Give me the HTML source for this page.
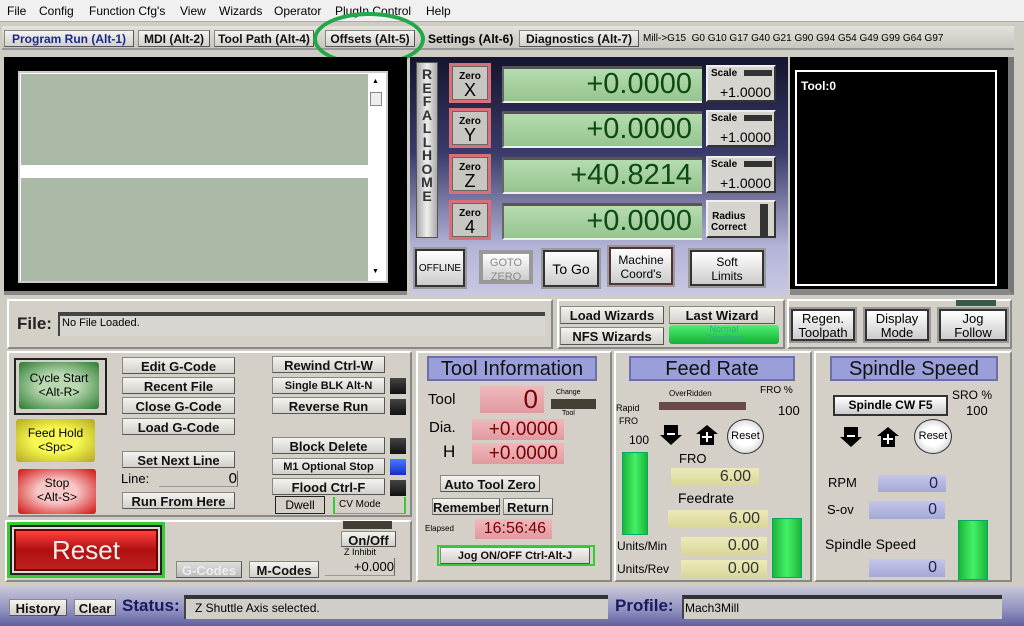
<!DOCTYPE html>
<html><head><meta charset="utf-8"><style>
*{box-sizing:border-box;margin:0;padding:0}
body{width:1024px;height:626px;overflow:hidden;background:#cfccc4;font-family:"Liberation Sans",sans-serif;position:relative}
div,span{position:absolute}
.b{background:linear-gradient(#f4f3f0,#d2d0ca);border:1px solid #8a877f;border-bottom-color:#555;border-right-color:#555;text-align:center;font-weight:bold;font-size:13px;color:#111;line-height:17px}
.t{white-space:nowrap}
.dro{background:linear-gradient(#b6dcb0,#96c48e);border-top:3px solid #555;border-left:2px solid #666;border-bottom:2px solid #eee;text-align:right;font-size:29px;color:#0c4a12;padding-right:10px;line-height:30px}
.zero{background:#c8c6c0;border:3px solid #d8707a;box-shadow:inset 0 0 0 1px #666;text-align:center;font-size:10px;font-weight:bold;line-height:11px}
.zero b{display:block;font-size:18px;font-weight:normal;line-height:17px}
.sc{background:#d6d4ce;border:2px solid #333;border-top-color:#eee;border-left-color:#eee;font-size:10px;font-weight:bold}
.pk{background:linear-gradient(#f0b8bc,#e09aa0);text-align:right;color:#700;font-size:19px;padding-right:6px}
.yl{background:linear-gradient(#ecebb8,#d8d69a);text-align:right;font-size:16px;color:#333;padding-right:8px}
.bl{background:linear-gradient(#c4c6ea,#a4a8d4);text-align:right;font-size:16px;color:#225;padding-right:8px}
.ttl{background:#9b9fd9;border:2px solid #6d70a8;text-align:center;font-size:20px;color:#111;line-height:22px}
.gbar{background:linear-gradient(90deg,#1bb63a,#44f066,#1bb63a);border:1px solid #0a6;}
.led{background:linear-gradient(#444,#111);width:16px;height:16px}
.pnl{background:#d4d0c8;border:2px solid #888;border-top-color:#fff;border-left-color:#fff}
.dk{border:2px solid #333;background:linear-gradient(#fff,#ccc);text-align:center;font-size:12px;line-height:14px;box-shadow:0 0 0 2px #999}
</style></head><body>
<div style="left:0;top:0;width:1024px;height:22px;background:#f0f0f0;border-bottom:1px solid #aaa"></div>
<span class="t" style="left:7px;top:4px;font-size:12px">File</span>
<span class="t" style="left:39px;top:4px;font-size:12px">Config</span>
<span class="t" style="left:89px;top:4px;font-size:12px">Function Cfg's</span>
<span class="t" style="left:180px;top:4px;font-size:12px">View</span>
<span class="t" style="left:219px;top:4px;font-size:12px">Wizards</span>
<span class="t" style="left:274px;top:4px;font-size:12px">Operator</span>
<span class="t" style="left:335px;top:4px;font-size:12px">PlugIn Control</span>
<span class="t" style="left:426px;top:4px;font-size:12px">Help</span>
<div style="left:2px;top:26px;width:1012px;height:24px;background:linear-gradient(#e4e2dc,#c8c5be);border-bottom:2px solid #999"></div>
<div class="b" style="left:4px;top:30px;width:130px;height:17px;color:#1a2a8a;font-size:12px">Program Run (Alt-1)</div>
<div class="b" style="left:138px;top:30px;width:72px;height:17px;font-size:12px">MDI (Alt-2)</div>
<div class="b" style="left:214px;top:30px;width:100px;height:17px;font-size:12px">Tool Path (Alt-4)</div>
<div class="b" style="left:325px;top:30px;width:90px;height:17px;font-size:12px">Offsets (Alt-5)</div>
<span class="t" style="left:428px;top:32px;font-size:12px;font-weight:bold">Settings (Alt-6)</span>
<div class="b" style="left:519px;top:30px;width:120px;height:17px;font-size:12px">Diagnostics (Alt-7)</div>
<span class="t" style="left:643px;top:33px;font-size:10px">Mill-&gt;G15 &nbsp;G0 G10 G17 G40 G21 G90 G94 G54 G49 G99 G64 G97</span>
<div style="left:313px;top:12px;width:112px;height:54px;border:4px solid #22a84a;border-radius:50%"></div>
<div style="left:4px;top:57px;width:403px;height:238px;background:#000;border-bottom:4px solid #888"></div>
<div style="left:18px;top:71px;width:370px;height:212px;background:#fff;border:2px solid #ccc"></div>
<div style="left:21px;top:74px;width:347px;height:91px;background:#abbaa7"></div>
<div style="left:21px;top:178px;width:347px;height:103px;background:#abbaa7"></div>
<div style="left:370px;top:92px;width:12px;height:14px;background:#eee;border:1px solid #888"></div>
<span class="t" style="left:372px;top:78px;font-size:7px">▲</span>
<span class="t" style="left:372px;top:268px;font-size:7px">▼</span>
<div style="left:410px;top:57px;width:378px;height:238px;background:linear-gradient(#15152e,#3a3a6a 40%,#b4b4d8 80%,#c8c8e4)"></div>
<div style="left:416px;top:62px;width:22px;height:176px;background:linear-gradient(90deg,#aaa,#eee,#aaa);border:1px solid #555;font-size:14px;text-align:center;line-height:13.5px;font-weight:bold;color:#333;padding-top:5px">R<br>E<br>F<br>A<br>L<br>L<br>H<br>O<br>M<br>E</div>
<div class="zero" style="left:449px;top:63px;width:42px;height:40px;padding-top:5px">Zero<b>X</b></div>
<div class="zero" style="left:449px;top:108px;width:42px;height:40px;padding-top:5px">Zero<b>Y</b></div>
<div class="zero" style="left:449px;top:154px;width:42px;height:40px;padding-top:5px">Zero<b>Z</b></div>
<div class="zero" style="left:449px;top:200px;width:42px;height:40px;padding-top:5px">Zero<b>4</b></div>
<div class="dro" style="left:502px;top:66px;width:200px;height:37px">+0.0000</div>
<div class="dro" style="left:502px;top:111px;width:200px;height:37px">+0.0000</div>
<div class="dro" style="left:502px;top:157px;width:200px;height:37px">+40.8214</div>
<div class="dro" style="left:502px;top:203px;width:200px;height:37px">+0.0000</div>
<div class="sc" style="left:706px;top:65px;width:70px;height:37px"><span style="left:3px;top:1px">Scale</span><span style="left:36px;top:3px;width:28px;height:6px;background:#333"></span><span style="right:3px;top:17px;font-size:14px;font-weight:normal">+1.0000</span></div>
<div class="sc" style="left:706px;top:110px;width:70px;height:37px"><span style="left:3px;top:1px">Scale</span><span style="left:36px;top:3px;width:28px;height:6px;background:#333"></span><span style="right:3px;top:17px;font-size:14px;font-weight:normal">+1.0000</span></div>
<div class="sc" style="left:706px;top:156px;width:70px;height:37px"><span style="left:3px;top:1px">Scale</span><span style="left:36px;top:3px;width:28px;height:6px;background:#333"></span><span style="right:3px;top:17px;font-size:14px;font-weight:normal">+1.0000</span></div>
<div class="sc" style="left:706px;top:200px;width:70px;height:38px"><span style="left:3px;top:9px;text-align:center;line-height:11px">Radius<br>Correct</span><span style="left:52px;top:2px;width:8px;height:32px;background:#333"></span></div>
<div class="dk" style="left:415px;top:249px;width:50px;height:38px;padding-top:11px;font-size:10px">OFFLINE</div>
<div class="dk" style="left:481px;top:252px;width:50px;height:30px;color:#888;border-color:#999;padding-top:2px;font-size:11px">GOTO<br>ZERO</div>
<div class="dk" style="left:543px;top:250px;width:56px;height:37px;padding-top:10px;font-size:14px">To Go</div>
<div class="dk" style="left:609px;top:247px;width:64px;height:38px;padding-top:4px;border-color:#533">Machine<br>Coord's</div>
<div class="dk" style="left:690px;top:250px;width:74px;height:36px;padding-top:3px">Soft<br>Limits</div>
<div style="left:790px;top:57px;width:224px;height:238px;background:#000;border-right:6px solid #777;border-bottom:6px solid #888"></div>
<div style="left:795px;top:70px;width:202px;height:216px;background:#000;border:2px solid #fff"></div>
<span class="t" style="left:801px;top:79px;color:#fff;font-size:12px;font-weight:bold">Tool:0</span>
<div class="pnl" style="left:7px;top:299px;width:546px;height:50px"></div>
<span class="t" style="left:17px;top:314px;font-size:17px;font-weight:bold;color:#222">File:</span>
<div style="left:58px;top:312px;width:487px;height:24px;background:#d8d6d0;border-top:4px solid #444;border-left:2px solid #444"></div>
<span class="t" style="left:62px;top:317px;font-size:11px">No File Loaded.</span>
<div class="pnl" style="left:557px;top:299px;width:228px;height:50px"></div>
<div class="b" style="left:560px;top:306px;width:104px;height:18px">Load Wizards</div>
<div class="b" style="left:669px;top:306px;width:106px;height:18px">Last Wizard</div>
<div class="b" style="left:560px;top:327px;width:104px;height:18px">NFS Wizards</div>
<div style="left:669px;top:325px;width:110px;height:19px;background:linear-gradient(#4ef070,#12b035);border-radius:3px;font-size:9px;color:#3a8;text-align:center;line-height:9px">Normal<br>Condition</div>
<div class="pnl" style="left:787px;top:299px;width:225px;height:50px"></div>
<div style="left:956px;top:300px;width:40px;height:6px;background:#3a5a48"></div>
<div class="dk" style="left:791px;top:309px;width:64px;height:32px;padding-top:1px;font-size:13px">Regen.<br>Toolpath</div>
<div class="dk" style="left:865px;top:309px;width:64px;height:32px;padding-top:1px;font-size:13px">Display<br>Mode</div>
<div class="dk" style="left:939px;top:309px;width:68px;height:32px;padding-top:1px;font-size:13px">Jog<br>Follow</div>
<div class="pnl" style="left:7px;top:351px;width:405px;height:166px"></div>
<div style="left:14px;top:358px;width:93px;height:57px;border:2px solid #222"></div>
<div style="left:19px;top:362px;width:80px;height:47px;background:radial-gradient(#b8d8b0 35%,#2a7a30);border-radius:3px;text-align:center;font-size:12px;line-height:14px;padding-top:9px">Cycle Start<br>&lt;Alt-R&gt;</div>
<div style="left:16px;top:419px;width:79px;height:43px;background:radial-gradient(#f8f850 40%,#b0a820);border-radius:3px;text-align:center;font-size:12px;line-height:14px;padding-top:7px">Feed Hold<br>&lt;Spc&gt;</div>
<div style="left:18px;top:469px;width:78px;height:45px;background:radial-gradient(#f8c8c8 35%,#d01010);border-radius:3px;text-align:center;font-size:12px;line-height:14px;padding-top:7px">Stop<br>&lt;Alt-S&gt;</div>
<div class="b" style="left:122px;top:357px;width:113px;height:17px">Edit G-Code</div>
<div class="b" style="left:122px;top:377px;width:113px;height:17px">Recent File</div>
<div class="b" style="left:122px;top:397px;width:113px;height:17px">Close G-Code</div>
<div class="b" style="left:122px;top:418px;width:113px;height:17px">Load G-Code</div>
<div class="b" style="left:122px;top:451px;width:113px;height:17px">Set Next Line</div>
<span class="t" style="left:121px;top:471px;font-size:13px">Line:</span>
<div style="left:159px;top:471px;width:79px;height:16px;border-bottom:1px solid #999;border-right:1px solid #666;text-align:right;font-size:15px;line-height:15px">0</div>
<div class="b" style="left:122px;top:492px;width:113px;height:17px">Run From Here</div>
<div class="b" style="left:272px;top:356px;width:113px;height:17px">Rewind Ctrl-W</div>
<div class="b" style="left:272px;top:377px;width:113px;height:17px;font-size:11px">Single BLK Alt-N</div>
<div class="b" style="left:272px;top:397px;width:113px;height:17px">Reverse Run</div>
<div class="b" style="left:272px;top:437px;width:113px;height:17px">Block Delete</div>
<div class="b" style="left:272px;top:458px;width:113px;height:17px;font-size:11px">M1 Optional Stop</div>
<div class="b" style="left:272px;top:478px;width:113px;height:17px">Flood Ctrl-F</div>
<div class="led" style="left:390px;top:378px"></div>
<div class="led" style="left:390px;top:399px"></div>
<div class="led" style="left:390px;top:438px"></div>
<div class="led" style="left:390px;top:459px;background:linear-gradient(#4a7aff,#1030c0)"></div>
<div class="led" style="left:390px;top:480px"></div>
<div style="left:275px;top:496px;width:50px;height:18px;border:1px solid #222;font-size:12px;text-align:center;line-height:16px">Dwell</div>
<div style="left:333px;top:497px;width:73px;height:17px;border-left:2px solid #3c3;border-right:2px solid #3c3;border-bottom:1px solid #3c3;font-size:10px;padding-left:4px;line-height:16px">CV Mode</div>
<div class="pnl" style="left:5px;top:520px;width:407px;height:62px"></div>
<div style="left:7px;top:522px;width:158px;height:56px;border:3px solid #3c3;background:#ddd;box-shadow:inset 0 0 0 2px #222"></div>
<div style="left:14px;top:529px;width:144px;height:42px;background:linear-gradient(#ff4040,#b01010 50%,#c02020);border:2px solid #600;color:#f4eeee;font-size:26px;text-align:center;line-height:38px">Reset</div>
<div class="b" style="left:176px;top:561px;width:66px;height:17px;color:#eee;background:linear-gradient(#ddd,#bbb)">G-Codes</div>
<div class="b" style="left:249px;top:561px;width:70px;height:17px">M-Codes</div>
<div style="left:343px;top:521px;width:49px;height:8px;background:#443f35"></div>
<div class="b" style="left:341px;top:531px;width:55px;height:16px">On/Off</div>
<span class="t" style="left:344px;top:547px;font-size:9px">Z Inhibit</span>
<div style="left:325px;top:558px;width:70px;height:18px;border-bottom:1px solid #999;border-right:1px solid #666;text-align:right;font-size:13px;line-height:18px">+0.000</div>
<div class="pnl" style="left:416px;top:351px;width:196px;height:231px"></div>
<div class="ttl" style="left:427px;top:356px;width:170px;height:25px">Tool Information</div>
<span class="t" style="left:428px;top:391px;font-size:15px">Tool</span>
<div class="pk" style="left:480px;top:386px;width:64px;height:27px;font-size:26px;line-height:27px">0</div>
<span class="t" style="left:556px;top:389px;font-size:7px">Change</span>
<div style="left:551px;top:399px;width:45px;height:10px;background:#444034"></div>
<span class="t" style="left:562px;top:410px;font-size:7px">Tool</span>
<span class="t" style="left:429px;top:419px;font-size:15px">Dia.</span>
<div class="pk" style="left:472px;top:419px;width:92px;height:21px;line-height:21px">+0.0000</div>
<span class="t" style="left:443px;top:442px;font-size:17px">H</span>
<div class="pk" style="left:472px;top:443px;width:92px;height:21px;line-height:21px">+0.0000</div>
<div class="b" style="left:440px;top:475px;width:100px;height:17px">Auto Tool Zero</div>
<div class="b" style="left:432px;top:498px;width:68px;height:17px">Remember</div>
<div class="b" style="left:503px;top:498px;width:50px;height:17px">Return</div>
<span class="t" style="left:425px;top:524px;font-size:8px">Elapsed</span>
<div class="pk" style="left:475px;top:519px;width:77px;height:20px;font-size:16px;line-height:20px">16:56:46</div>
<div style="left:437px;top:545px;width:158px;height:21px;border:2px solid #3c3"></div>
<div class="b" style="left:440px;top:547px;width:150px;height:17px;font-size:11px">Jog ON/OFF Ctrl-Alt-J</div>
<div class="pnl" style="left:614px;top:351px;width:198px;height:231px"></div>
<div class="ttl" style="left:629px;top:356px;width:166px;height:25px">Feed Rate</div>
<span class="t" style="left:669px;top:389px;font-size:8px">OverRidden</span>
<div style="left:659px;top:402px;width:87px;height:8px;background:#6a4a48"></div>
<span class="t" style="left:760px;top:385px;font-size:10px">FRO %</span>
<span class="t" style="left:778px;top:403px;font-size:13px">100</span>
<span class="t" style="left:616px;top:403px;font-size:9px">Rapid</span>
<span class="t" style="left:619px;top:416px;font-size:9px">FRO</span>
<span class="t" style="left:629px;top:433px;font-size:12px">100</span>
<div class="gbar" style="left:622px;top:452px;width:26px;height:83px"></div>
<svg style="position:absolute;left:660px;top:424px" width="22" height="22"><path d="M4 1h14v10h4l-11 10L0 11h4z" fill="#000"/><rect x="7" y="9" width="8" height="2" fill="#fff"/></svg>
<svg style="position:absolute;left:696px;top:424px" width="22" height="22"><path d="M11 1l11 9h-4v11H4V10H0z" fill="#000"/><path d="M11 8v10M6 13h10" stroke="#fff" stroke-width="2"/></svg>
<div style="left:727px;top:419px;width:37px;height:35px;border-radius:50%;background:radial-gradient(#fff 40%,#bbb);border:1px solid #333;font-size:11px;text-align:center;line-height:33px">Reset</div>
<span class="t" style="left:679px;top:451px;font-size:13px">FRO</span>
<div class="yl" style="left:671px;top:468px;width:88px;height:18px;line-height:18px">6.00</div>
<span class="t" style="left:678px;top:490px;font-size:14px">Feedrate</span>
<div class="yl" style="left:668px;top:510px;width:100px;height:18px;line-height:18px">6.00</div>
<div class="gbar" style="left:772px;top:518px;width:30px;height:60px"></div>
<span class="t" style="left:617px;top:539px;font-size:12px">Units/Min</span>
<div class="yl" style="left:681px;top:537px;width:86px;height:18px;line-height:18px">0.00</div>
<span class="t" style="left:617px;top:562px;font-size:12px">Units/Rev</span>
<div class="yl" style="left:681px;top:560px;width:86px;height:18px;line-height:18px">0.00</div>
<div class="pnl" style="left:814px;top:351px;width:198px;height:231px"></div>
<div class="ttl" style="left:830px;top:356px;width:168px;height:25px">Spindle Speed</div>
<div style="left:833px;top:395px;width:115px;height:21px;border:2px solid #333;background:linear-gradient(#fff,#ccc);font-size:12px;font-weight:bold;text-align:center;line-height:17px">Spindle CW F5</div>
<span class="t" style="left:952px;top:388px;font-size:12px">SRO %</span>
<span class="t" style="left:966px;top:403px;font-size:13px">100</span>
<svg style="position:absolute;left:840px;top:426px" width="22" height="22"><path d="M4 1h14v10h4l-11 10L0 11h4z" fill="#000"/><rect x="7" y="9" width="8" height="2" fill="#fff"/></svg>
<svg style="position:absolute;left:877px;top:426px" width="22" height="22"><path d="M11 1l11 9h-4v11H4V10H0z" fill="#000"/><path d="M11 8v10M6 13h10" stroke="#fff" stroke-width="2"/></svg>
<div style="left:914px;top:419px;width:38px;height:35px;border-radius:50%;background:radial-gradient(#fff 40%,#bbb);border:1px solid #333;font-size:11px;text-align:center;line-height:33px">Reset</div>
<span class="t" style="left:828px;top:475px;font-size:13px">RPM</span>
<div class="bl" style="left:878px;top:475px;width:68px;height:17px;line-height:17px">0</div>
<span class="t" style="left:827px;top:502px;font-size:13px">S-ov</span>
<div class="bl" style="left:869px;top:501px;width:76px;height:18px;line-height:18px">0</div>
<span class="t" style="left:825px;top:536px;font-size:14px">Spindle Speed</span>
<div class="bl" style="left:869px;top:559px;width:76px;height:18px;line-height:18px">0</div>
<div class="gbar" style="left:958px;top:520px;width:30px;height:60px"></div>
<div style="left:0;top:586px;width:1024px;height:40px;background:linear-gradient(#c8c8d8,#9090c0 60%,#6060a0)"></div>
<div class="b" style="left:9px;top:599px;width:58px;height:17px">History</div>
<div class="b" style="left:74px;top:599px;width:42px;height:17px">Clear</div>
<span class="t" style="left:122px;top:596px;font-size:17px;font-weight:bold;color:#1a1a60">Status:</span>
<div style="left:184px;top:595px;width:424px;height:24px;background:#d0cec8;border-top:4px solid #333;border-left:2px solid #444"></div>
<span class="t" style="left:195px;top:601px;font-size:12px">Z Shuttle Axis selected.</span>
<span class="t" style="left:615px;top:596px;font-size:17px;font-weight:bold;color:#1a1a60">Profile:</span>
<div style="left:682px;top:595px;width:320px;height:24px;background:#d0cec8;border-top:4px solid #333;border-left:2px solid #444"></div>
<span class="t" style="left:685px;top:601px;font-size:12px">Mach3Mill</span>
</body></html>
